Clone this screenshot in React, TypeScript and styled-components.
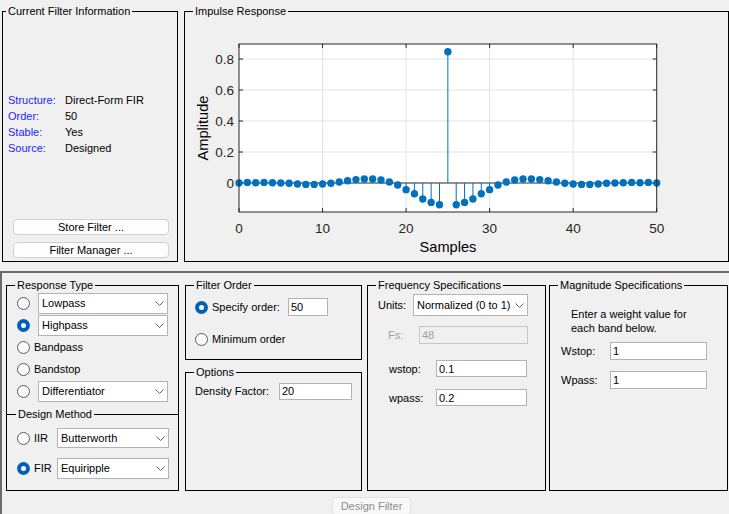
import { Fragment } from 'react';
import styled, { createGlobalStyle } from 'styled-components';

const GlobalStyle = createGlobalStyle`
  html, body {
    margin: 0;
    padding: 0;
    background: #f0f0f0;
  }
  body {
    font-family: "Liberation Sans", Arial, sans-serif;
    font-size: 11px;
    color: #000;
  }
`;

const Window = styled.div`
  width: 729px;
  height: 514px;
  overflow: hidden;
  background: #f0f0f0;
  display: flex;
  flex-direction: column;
`;

const TopRow = styled.div`
  display: flex;
  gap: 6px;
  padding: 4px 0 0 2px;
  height: 258px;
`;

const Group = styled.fieldset<{ $w?: number; $h?: number }>`
  margin: 0;
  padding: 0;
  min-width: 0;
  border: 1px solid #000;
  box-sizing: border-box;
  display: flex;
  flex-direction: column;
  width: ${(p) => (p.$w ? `${p.$w}px` : 'auto')};
  height: ${(p) => (p.$h ? `${p.$h}px` : 'auto')};
`;

const Legend = styled.legend<{ $offset?: number }>`
  margin-left: ${(p) => p.$offset ?? 8}px;
  padding: 0 2px;
  font-size: 11px;
  line-height: 14px;
`;

const SubGroup = styled.fieldset`
  margin: 5px 0 0;
  padding: 6px 0 0;
  min-width: 0;
  border: none;
  border-top: 1px solid #000;
  display: flex;
  flex-direction: column;
  gap: 8px;
`;

const InfoList = styled.div`
  display: grid;
  grid-template-columns: 57px auto;
  margin: 74px 0 0 5px;
  line-height: 16px;
`;

const InfoLabel = styled.span`
  color: #1f1fff;
`;

const ButtonStack = styled.div`
  margin-top: auto;
  display: flex;
  flex-direction: column;
  gap: 7px;
  padding: 0 8px 3px 10px;
`;

const PushButton = styled.button`
  height: 16px;
  padding: 0;
  border: 1px solid #d0d0d0;
  border-radius: 4px;
  background: #fdfdfd;
  font-family: inherit;
  font-size: 11px;
  line-height: 14px;
  color: #000;
`;

const PlotSvg = styled.svg`
  display: block;
`;

const Dialog = styled.div`
  flex: 1;
  margin-top: 9px;
  border-top: 2px solid #6b6b6b;
  border-left: 2px solid #6b6b6b;
  padding: 5px 0 0 4px;
  display: flex;
  flex-direction: column;
`;

const Columns = styled.div`
  display: flex;
  height: 213px;
`;

const Column = styled.div<{ $w: number; $ml?: number }>`
  width: ${(p) => p.$w}px;
  margin-left: ${(p) => p.$ml ?? 0}px;
  display: flex;
  flex-direction: column;
  gap: 5px;
`;

const Row = styled.div<{ $pl?: number; $mt?: number; $h?: number }>`
  display: flex;
  align-items: center;
  height: ${(p) => p.$h ?? 22}px;
  padding-left: ${(p) => p.$pl ?? 0}px;
  margin-top: ${(p) => p.$mt ?? 0}px;
  flex: none;
`;

const Radio = styled.span<{ $on?: boolean }>`
  flex: none;
  width: 13px;
  height: 13px;
  border-radius: 50%;
  box-sizing: border-box;
  background: ${(p) => (p.$on ? '#fff' : '#fbfbfb')};
  border: ${(p) => (p.$on ? 'none' : '1px solid #5c5c5c')};
  box-shadow: ${(p) => (p.$on ? 'inset 0 0 0 4px #005fb8' : 'none')};
`;

const Label = styled.span<{ $w?: number; $ml?: number; $muted?: boolean }>`
  flex: none;
  width: ${(p) => (p.$w ? `${p.$w}px` : 'auto')};
  margin-left: ${(p) => p.$ml ?? 0}px;
  color: ${(p) => (p.$muted ? '#a0a0a0' : '#000')};
  white-space: nowrap;
`;

const SelectBox = styled.div<{ $w: number; $h?: number; $ml?: number }>`
  flex: none;
  width: ${(p) => p.$w}px;
  height: ${(p) => p.$h ?? 21}px;
  margin-left: ${(p) => p.$ml ?? 0}px;
  box-sizing: border-box;
  border: 1px solid #b3b3b3;
  background: #fff;
  display: flex;
  align-items: center;
  justify-content: space-between;
  padding: 0 3px 0 3px;
`;

const TextBox = styled.input<{ $w: number; $h?: number }>`
  flex: none;
  width: ${(p) => p.$w}px;
  height: ${(p) => p.$h ?? 18}px;
  box-sizing: border-box;
  margin: 0;
  padding: 0 2px;
  border: 1px solid #b3b3b3;
  background: #fff;
  font-family: inherit;
  font-size: 11px;
  color: #000;
  outline: none;

  &:disabled {
    background: #f0f0f0;
    border-color: #c6c6c6;
    color: #a0a0a0;
  }
`;

const Note = styled.div`
  margin: 15px 0 0 21px;
  line-height: 14px;
`;

const Footer = styled.div`
  display: flex;
  justify-content: center;
  margin-top: 6px;
  padding-left: 8px;
`;

const DesignButton = styled.button`
  width: 79px;
  height: 18px;
  padding: 0;
  border: 1px solid #e2e2e2;
  border-radius: 3px;
  background: #f8f8f8;
  font-family: inherit;
  font-size: 11px;
  color: #8e8e8e;
`;

const Chevron = () => (
  <svg width="9" height="5" viewBox="0 0 9 5">
    <polyline points="0.5,0.5 4.5,4.5 8.5,0.5" fill="none" stroke="#5f5f5f" strokeWidth="1" />
  </svg>
);

const Select = ({ value, w, h, ml }: { value: string; w: number; h?: number; ml?: number }) => (
  <SelectBox $w={w} $h={h} $ml={ml}>
    <span>{value}</span>
    <Chevron />
  </SelectBox>
);

const half = [
  0, 0.004, 0.002, 0.004, 0.002, 0, -0.002, -0.006, -0.009, -0.009, -0.006, -0.002, 0.006,
  0.015, 0.022, 0.026, 0.026, 0.019, 0.006, -0.013, -0.043, -0.069, -0.103, -0.125, -0.14,
];
const impulse = [...half, 0.847, ...half.slice().reverse()];

const AX0 = 239;
const AX1 = 656.7;
const AY0 = 44;
const AY1 = 212;
const ZERO = 183;
const px = (n: number) => AX0 + (n * (AX1 - AX0)) / 50;
const py = (v: number) => ZERO - v * 155;
const axisColor = '#262626';
const stemColor = '#0072bd';

const ImpulsePlot = () => {
  const xTicks = [0, 10, 20, 30, 40, 50];
  const yTicks = [0, 0.2, 0.4, 0.6, 0.8];
  return (
    <PlotSvg width={543} height={243} viewBox="185 18 543 243">
      <rect x={AX0} y={AY0} width={AX1 - AX0} height={AY1 - AY0} fill="#fff" />
      {xTicks.slice(1, -1).map((t) => (
        <line key={`gx${t}`} x1={px(t)} x2={px(t)} y1={AY0} y2={AY1} stroke="#e3e3e3" />
      ))}
      {yTicks.slice(1).map((t) => (
        <line key={`gy${t}`} x1={AX0} x2={AX1} y1={py(t)} y2={py(t)} stroke="#e3e3e3" />
      ))}
      {xTicks.map((t) => (
        <g key={`tx${t}`}>
          <line x1={px(t)} x2={px(t)} y1={AY1} y2={AY1 - 4} stroke={axisColor} />
          <line x1={px(t)} x2={px(t)} y1={AY0} y2={AY0 + 4} stroke={axisColor} />
          <text
            x={px(t)}
            y={233}
            textAnchor="middle"
            fontFamily="Liberation Sans, Arial, sans-serif"
            fontSize="13.5"
            fill={axisColor}
          >
            {t}
          </text>
        </g>
      ))}
      {yTicks.map((t) => (
        <g key={`ty${t}`}>
          <line x1={AX0} x2={AX0 + 4} y1={py(t)} y2={py(t)} stroke={axisColor} />
          <line x1={AX1} x2={AX1 - 4} y1={py(t)} y2={py(t)} stroke={axisColor} />
          <text
            x={234}
            y={py(t) + 4.9}
            textAnchor="end"
            fontFamily="Liberation Sans, Arial, sans-serif"
            fontSize="13.5"
            fill={axisColor}
          >
            {t === 0 ? '0' : t.toFixed(1)}
          </text>
        </g>
      ))}
      <line x1={AX0} x2={AX1} y1={ZERO} y2={ZERO} stroke={axisColor} />
      {impulse.map((v, n) => (
        <line key={`s${n}`} x1={px(n)} x2={px(n)} y1={ZERO} y2={py(v)} stroke={stemColor} />
      ))}
      {impulse.map((v, n) => (
        <circle key={`m${n}`} cx={px(n)} cy={py(v)} r={3.7} fill={stemColor} />
      ))}
      <rect
        x={AX0}
        y={AY0}
        width={AX1 - AX0}
        height={AY1 - AY0}
        fill="none"
        stroke={axisColor}
      />
      <text
        x={448}
        y={252.3}
        textAnchor="middle"
        fontFamily="Liberation Sans, Arial, sans-serif"
        fontSize="14.6"
        fill="#000"
      >
        Samples
      </text>
      <text
        x={208}
        y={128}
        textAnchor="middle"
        transform="rotate(-90 208 128)"
        fontFamily="Liberation Sans, Arial, sans-serif"
        fontSize="14.6"
        fill="#000"
      >
        Amplitude
      </text>
    </PlotSvg>
  );
};

const info: [string, string][] = [
  ['Structure:', 'Direct-Form FIR'],
  ['Order:', '50'],
  ['Stable:', 'Yes'],
  ['Source:', 'Designed'],
];

export default function App() {
  return (
    <Window>
      <GlobalStyle />
      <TopRow>
        <Group $w={176} $h={258}>
          <Legend $offset={3}>Current Filter Information</Legend>
          <InfoList>
            {info.map(([k, v]) => (
              <Fragment key={k}>
                <InfoLabel>{k}</InfoLabel>
                <span>{v}</span>
              </Fragment>
            ))}
          </InfoList>
          <ButtonStack>
            <PushButton>Store Filter ...</PushButton>
            <PushButton>Filter Manager ...</PushButton>
          </ButtonStack>
        </Group>
        <Group $w={545} $h={258}>
          <Legend>Impulse Response</Legend>
          <ImpulsePlot />
        </Group>
      </TopRow>

      <Dialog>
        <Columns>
          <Column $w={173}>
            <Group $h={213}>
              <Legend>Response Type</Legend>
              <Row $pl={10}>
                <Radio />
                <Select value="Lowpass" w={130} ml={8} />
              </Row>
              <Row $pl={10}>
                <Radio $on />
                <Select value="Highpass" w={130} ml={8} />
              </Row>
              <Row $pl={10}>
                <Radio />
                <Label $ml={4}>Bandpass</Label>
              </Row>
              <Row $pl={10}>
                <Radio />
                <Label $ml={4}>Bandstop</Label>
              </Row>
              <Row $pl={10}>
                <Radio />
                <Select value="Differentiator" w={130} ml={8} />
              </Row>
              <SubGroup>
                <Legend $offset={9}>Design Method</Legend>
                <Row $pl={10}>
                  <Radio />
                  <Label $ml={4} $w={23}>IIR</Label>
                  <Select value="Butterworth" w={112} h={20} />
                </Row>
                <Row $pl={10}>
                  <Radio $on />
                  <Label $ml={4} $w={23}>FIR</Label>
                  <Select value="Equiripple" w={112} h={21} />
                </Row>
              </SubGroup>
            </Group>
          </Column>

          <Column $w={177} $ml={6}>
            <Group $h={82}>
              <Legend>Filter Order</Legend>
              <Row $pl={9} $mt={4}>
                <Radio $on />
                <Label $ml={4} $w={76}>Specify order:</Label>
                <TextBox $w={40} readOnly value="50" />
              </Row>
              <Row $pl={9} $mt={10}>
                <Radio />
                <Label $ml={4}>Minimum order</Label>
              </Row>
            </Group>
            <Group $h={126}>
              <Legend>Options</Legend>
              <Row $pl={9} $mt={1}>
                <Label $w={84}>Density Factor:</Label>
                <TextBox $w={73} $h={17} readOnly value="20" />
              </Row>
            </Group>
          </Column>

          <Column $w={179} $ml={5}>
            <Group $h={213}>
              <Legend>Frequency Specifications</Legend>
              <Row $pl={10} $mt={2}>
                <Label $w={35}>Units:</Label>
                <Select value="Normalized (0 to 1)" w={115} h={22} />
              </Row>
              <Row $pl={20} $mt={10} $h={18}>
                <Label $w={31} $muted>Fs:</Label>
                <TextBox $w={109} disabled value="48" readOnly />
              </Row>
              <Row $pl={21} $mt={16} $h={17}>
                <Label $w={47}>wstop:</Label>
                <TextBox $w={91} $h={17} readOnly value="0.1" />
              </Row>
              <Row $pl={21} $mt={12} $h={17}>
                <Label $w={47}>wpass:</Label>
                <TextBox $w={91} $h={17} readOnly value="0.2" />
              </Row>
            </Group>
          </Column>

          <Column $w={179} $ml={3}>
            <Group $h={213}>
              <Legend>Magnitude Specifications</Legend>
              <Note>
                Enter a weight value for
                <br />
                each band below.
              </Note>
              <Row $pl={11} $mt={7} $h={18}>
                <Label $w={49}>Wstop:</Label>
                <TextBox $w={97} readOnly value="1" />
              </Row>
              <Row $pl={11} $mt={11} $h={18}>
                <Label $w={49}>Wpass:</Label>
                <TextBox $w={97} readOnly value="1" />
              </Row>
            </Group>
          </Column>
        </Columns>
        <Footer>
          <DesignButton disabled>Design Filter</DesignButton>
        </Footer>
      </Dialog>
    </Window>
  );
}
